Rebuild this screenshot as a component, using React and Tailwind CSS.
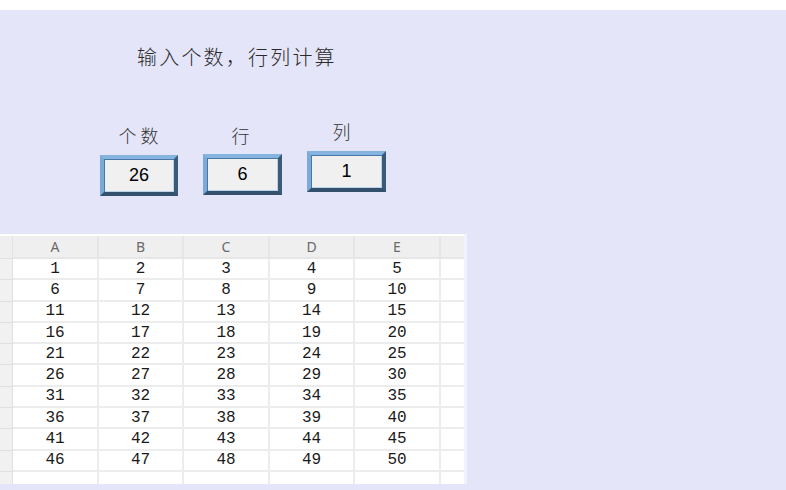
import React from "react";

const cols = ["A", "B", "C", "D", "E"];
const rows = Array.from({ length: 10 }, (_, r) =>
  Array.from({ length: 5 }, (_, c) => r * 5 + c + 1)
);

function Box({ value, className }) {
  return (
    <div
      className={
        "w-full h-[41px] flex items-center justify-center bg-[#f0f0f0] border-[4px] border-t-[#86b4e0] border-l-[#7aaad8] border-b-[#33506d] border-r-[#3b5a78] shadow-[inset_1px_1px_0_#4a78a6,inset_-1px_-1px_0_#b9d3ec] text-[18px] text-black " +
        (className || "")
      }
      style={{ fontFamily: '"Liberation Sans", Arial, sans-serif' }}
    >
      {value}
    </div>
  );
}

export default function App() {
  const cjk = { fontFamily: '"Noto Sans CJK SC", "Noto Sans", sans-serif' };
  return (
    <div className="w-[786px] h-[490px] bg-white overflow-hidden">
      <div className="h-[10px] bg-white" />
      <div className="h-[480px] bg-[#e4e5f8]">
        <div
          className="pt-[37px] pl-[137px] text-[20px] leading-[20px] tracking-[2.2px] text-[#2a2a2a] font-light"
          style={cjk}
        >
          输入个数，行列计算
        </div>
        <div className="flex items-start pl-[100px] gap-[25px] mt-[55px]">
          <div className="w-[78px] pt-[4px] flex flex-col">
            <div
              className="h-[18px] text-[18px] leading-[18px] tracking-[4px] text-center pl-[3px] text-[#333] font-light"
              style={cjk}
            >
              个数
            </div>
            <div className="mt-[11px]">
              <Box value="26" />
            </div>
          </div>
          <div className="w-[79px] pt-[4px] flex flex-col">
            <div
              className="h-[18px] text-[18px] leading-[18px] text-center pr-[4px] text-[#333] font-light"
              style={cjk}
            >
              行
            </div>
            <div className="mt-[10px]">
              <Box value="6" className="h-[40px]" />
            </div>
          </div>
          <div className="w-[79px] flex flex-col">
            <div
              className="h-[18px] text-[18px] leading-[18px] text-center pr-[10px] text-[#333] font-light"
              style={cjk}
            >
              列
            </div>
            <div className="mt-[11px]">
              <Box value="1" />
            </div>
          </div>
        </div>

        <div className="mt-[38px] w-[467px] h-[250px] bg-white pt-[2px] border-r-[3px] border-[#eef4fa] overflow-hidden">
          <div className="grid grid-cols-[13px_86px_85px_86px_85px_86px_23px]">
            <div className="h-[23px] bg-[#efefef] border-r border-b border-[#e2e2e2]" />
            {cols.map((c) => (
              <div
                key={c}
                className="h-[23px] bg-[#efefef] border-r-2 border-b-2 border-[#e6e6e6] flex items-center justify-center text-[14px] text-[#6a6a6a]"
                style={{ fontFamily: '"Noto Sans", "Liberation Sans", sans-serif' }}
              >
                {c}
              </div>
            ))}
            <div className="h-[23px] bg-[#efefef] border-b-2 border-[#e6e6e6]" />
            {rows.map((r, i) => (
              <React.Fragment key={i}>
                <div className="h-[21.3px] bg-[#f1f1f1] border-r border-b border-[#e0e0e0]" />
                {r.map((v) => (
                  <div
                    key={v}
                    className="h-[21.3px] bg-white border-r-2 border-b-2 border-[#ececec] flex items-center justify-center text-[16px] leading-none text-[#1a1a1a]"
                    style={{ fontFamily: '"Liberation Mono", "Courier New", monospace' }}
                  >
                    {v}
                  </div>
                ))}
                <div className="h-[21.3px] bg-white border-b-2 border-[#ececec]" />
              </React.Fragment>
            ))}
            <div className="h-[12px] bg-[#f1f1f1] border-r border-[#e0e0e0]" />
            {cols.map((c) => (
              <div key={"e" + c} className="h-[12px] bg-white border-r-2 border-[#ececec]" />
            ))}
            <div className="h-[12px] bg-white" />
          </div>
        </div>
      </div>
    </div>
  );
}
